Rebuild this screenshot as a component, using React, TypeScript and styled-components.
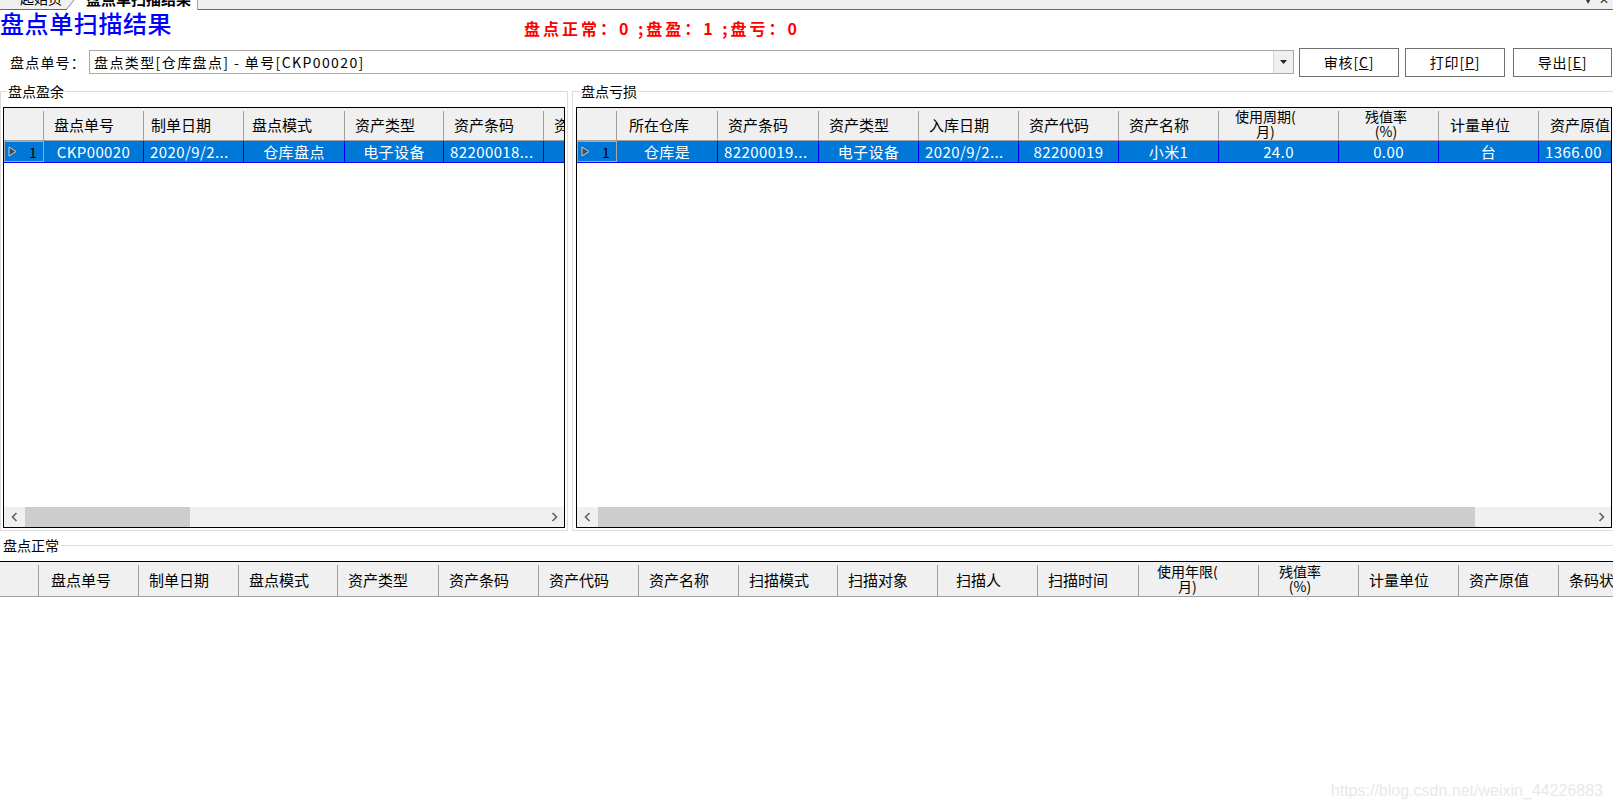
import React from 'react';
import styled, { createGlobalStyle, css } from 'styled-components';

const GlobalStyle = createGlobalStyle`
    html, body {
        margin: 0;
        padding: 0;
        background: #fff;
    }
    body {
        font-family: "Noto Sans CJK SC", "Noto Sans", sans-serif;
        color: #000;
        overflow: hidden;
    }
`

const Page = styled.div`
    position: relative;
    width: 1613px;
    height: 808px;
    overflow: hidden;
    display: flex;
    flex-direction: column;
    background: #fff;
`

/* ---------- document tabs ---------- */

const TabStrip = styled.div`
    display: flex;
    flex: none;
    height: 10px;
    overflow: hidden;
    background: #f0f0f0;
`

const Tab = styled.div<{ $active?: boolean; $width: number }>`
    flex: none;
    box-sizing: border-box;
    width: ${p => p.$width}px;
    height: 10px;
    display: flex;
    align-items: flex-end;
    overflow: hidden;
    padding-bottom: 3px;
    ${p => p.$active
        ? css`
            background: #fff;
            border-right: 1px solid #a0a0a0;
            padding-left: 12px;
            font-weight: 700;
            font-size: 15px;
        `
        : css`
            border-bottom: 1px solid #696969;
            padding-left: 20px;
            font-size: 14px;
        `}
`

const TabLabel = styled.span`
    line-height: 16px;
    white-space: nowrap;
`

const TabSlant = styled.svg`
    flex: none;
    display: block;
`

const TabFiller = styled.div`
    flex: 1;
    height: 10px;
    box-sizing: border-box;
    border-bottom: 1px solid #696969;
    display: flex;
    justify-content: flex-end;
    align-items: flex-end;
    padding: 0 4px 4px 0;
    gap: 8px;
    overflow: hidden;
    font-size: 12px;
    color: #333;
`

const TabGlyph = styled.span`
    line-height: 12px;
`

/* ---------- title + summary ---------- */

const TitleRow = styled.div`
    display: flex;
    align-items: flex-start;
    flex: none;
    height: 37px;
`

const PageTitle = styled.h1`
    margin: 0;
    width: 524px;
    flex: none;
    font-size: 24px;
    line-height: 26px;
    font-weight: 500;
    letter-spacing: 0.6px;
    color: #0000ff;
`

const Summary = styled.div`
    margin-top: 9px;
    font-size: 16px;
    line-height: 18px;
    font-weight: 700;
    letter-spacing: 3px;
    white-space: pre;
    color: #ff0000;
`

/* ---------- toolbar ---------- */

const Toolbar = styled.div`
    display: flex;
    align-items: center;
    flex: none;
    height: 30px;
    padding-left: 10px;
`

const FieldLabel = styled.span`
    width: 79px;
    flex: none;
    font-size: 14px;
    letter-spacing: 1.2px;
    white-space: nowrap;
`

const Combo = styled.div`
    width: 1205px;
    height: 24px;
    flex: none;
    box-sizing: border-box;
    border: 1px solid #a9a9a9;
    display: flex;
    background: #fff;
`

const ComboText = styled.div`
    flex: 1;
    padding-left: 4px;
    font-size: 14px;
    line-height: 22px;
    letter-spacing: 1.4px;
    white-space: pre;
`

const ComboButton = styled.div`
    width: 19px;
    flex: none;
    border-left: 1px solid #d4d4d4;
    background: #f0f0f0;
    display: flex;
    align-items: center;
    justify-content: center;
`

const ActionButton = styled.button<{ $gap: number; $width?: number }>`
    margin-left: ${p => p.$gap}px;
    width: ${p => p.$width || 100}px;
    height: 29px;
    flex: none;
    box-sizing: border-box;
    padding: 0;
    border: 1px solid #707070;
    background: #fff;
    color: #000;
    font-family: "Noto Sans CJK SC", sans-serif;
    font-size: 14px;
    letter-spacing: 0.8px;

    u {
        text-decoration: underline;
    }
`

/* ---------- group boxes ---------- */

const TopPanels = styled.div`
    display: flex;
    gap: 4px;
    flex: none;
    margin-top: 4px;
`

const GroupBox = styled.fieldset<{ $width: number; $pad: number }>`
    margin: 0;
    min-width: 0;
    flex: none;
    box-sizing: border-box;
    width: ${p => p.$width}px;
    border: 1px solid #dcdcdc;
    padding: 6px ${p => p.$pad}px 2px;
`

const GroupLegend = styled.legend`
    margin-left: 4px;
    padding: 0 1px;
    font-size: 14px;
    line-height: 20px;
`

const BottomSection = styled.div`
    flex: 1;
    min-height: 0;
    display: flex;
    flex-direction: column;
    margin-top: 4px;
`

const SectionHead = styled.div`
    display: flex;
    align-items: center;
    flex: none;
    height: 20px;
    padding-left: 3px;
    font-size: 14px;
    margin-bottom: 6px;
`

const SectionRule = styled.div`
    flex: 1;
    height: 1px;
    margin-left: 2px;
    background: #dcdcdc;
`

/* ---------- data grid ---------- */

const GridFrame = styled.div<{ $open?: boolean }>`
    box-sizing: border-box;
    display: flex;
    flex-direction: column;
    overflow: hidden;
    background: #fff;
    font-size: 15px;
    ${p => p.$open
        ? css`
            flex: 1;
            border-top: 1px solid #000;
        `
        : css`
            height: 421px;
            border: 1px solid #000;
        `}
`

const HeaderRow = styled.div<{ $height: number }>`
    display: flex;
    flex: none;
    height: ${p => p.$height}px;
    background: #f0f0f0;
    border-bottom: 1px solid #a0a0a0;
`

const HeadCell = styled.div<{ $width: number; $pad: number }>`
    position: relative;
    flex: none;
    box-sizing: border-box;
    width: ${p => p.$width}px;
    display: flex;
    align-items: center;
    padding-left: ${p => p.$pad}px;
    white-space: nowrap;
    overflow: hidden;

    &::after {
        content: "";
        position: absolute;
        right: 0;
        top: 3px;
        bottom: 0;
        width: 1px;
        background: #a0a0a0;
    }
`

const WrappedTitle = styled.span`
    display: inline-block;
    text-align: center;
    font-size: 14px;
    line-height: 15px;
`

const DataRow = styled.div`
    display: flex;
    flex: none;
    height: 21px;
    background: #0078d7;
    border-bottom: 1px solid #0000ff;
    color: #fff;
`

const RowMarker = styled.div<{ $width: number }>`
    flex: none;
    box-sizing: border-box;
    width: ${p => p.$width}px;
    display: flex;
    align-items: center;
    gap: 12px;
    padding-left: 4px;
    box-shadow: inset 0 0 0 1px #a9a9a9;
    color: #000;
    font-size: 14px;
`

const DataCell = styled.div<{ $width: number; $align: 'left' | 'center' }>`
    flex: none;
    box-sizing: border-box;
    width: ${p => p.$width}px;
    display: flex;
    align-items: center;
    justify-content: ${p => p.$align === 'center' ? 'center' : 'flex-start'};
    padding: 0 6px;
    border-right: 1px solid #0000ff;
    white-space: nowrap;
    overflow: hidden;
    letter-spacing: 0.4px;
`

const GridBody = styled.div`
    flex: 1;
`

const HScroll = styled.div`
    flex: none;
    display: flex;
    height: 20px;
    background: #f0f0f0;
`

const ScrollArrow = styled.div<{ $width: number }>`
    flex: none;
    width: ${p => p.$width}px;
    display: flex;
    align-items: center;
    justify-content: center;
`

const ScrollTrack = styled.div`
    flex: 1;
    display: flex;
`

const ScrollThumb = styled.div<{ $width: number }>`
    width: ${p => p.$width}px;
    background: #cdcdcd;
`

const Watermark = styled.div`
    position: absolute;
    right: 10px;
    bottom: 8px;
    font-family: "Liberation Sans", Arial, sans-serif;
    font-size: 16px;
    color: #e9e9e9;
    pointer-events: none;
`

/* ---------- helpers ---------- */

interface Column {
    title: string
    width: number
    pad?: number
    lines?: string[]
}

interface Cell {
    text: string
    align: 'left' | 'center'
}

const Chevron = ({ dir }: { dir: 'left' | 'right' }) => (
    <svg width="7" height="10" viewBox="0 0 7 10">
        <polyline
            points={dir === 'left' ? '5.5,1 1.5,5 5.5,9' : '1.5,1 5.5,5 1.5,9'}
            fill="none"
            stroke="#606060"
            strokeWidth="1.6"
        />
    </svg>
)

const RowArrow = () => (
    <svg width="9" height="11" viewBox="0 0 9 11">
        <polygon points="1,1 8,5.5 1,10" fill="#4a4a4a" stroke="#cfcfcf" strokeWidth="1" />
    </svg>
)

interface GridProps {
    columns: Column[]
    markerWidth: number
    headHeight: number
    row?: Cell[]
    thumb?: number
    open?: boolean
}

const DataGrid = ({ columns, markerWidth, headHeight, row, thumb, open }: GridProps) => (
    <GridFrame $open={open}>
        <HeaderRow $height={headHeight}>
            <HeadCell $width={markerWidth} $pad={0} />
            {columns.map(col => (
                <HeadCell key={col.title} $width={col.width} $pad={col.pad ?? 10}>
                    {col.lines
                        ? <WrappedTitle>{col.lines[0]}<br />{col.lines[1]}</WrappedTitle>
                        : col.title}
                </HeadCell>
            ))}
        </HeaderRow>
        {row && (
            <DataRow>
                <RowMarker $width={markerWidth}>
                    <RowArrow />
                    <span>1</span>
                </RowMarker>
                {row.map((cell, i) => (
                    <DataCell key={i} $width={columns[i].width} $align={cell.align}>{cell.text}</DataCell>
                ))}
            </DataRow>
        )}
        <GridBody />
        {thumb !== undefined && (
            <HScroll>
                <ScrollArrow $width={21}><Chevron dir="left" /></ScrollArrow>
                <ScrollTrack><ScrollThumb $width={thumb} /></ScrollTrack>
                <ScrollArrow $width={20}><Chevron dir="right" /></ScrollArrow>
            </HScroll>
        )}
    </GridFrame>
)

/* ---------- data ---------- */

const surplusColumns: Column[] = [
    { title: '盘点单号', width: 100 },
    { title: '制单日期', width: 100, pad: 7 },
    { title: '盘点模式', width: 101, pad: 8 },
    { title: '资产类型', width: 99 },
    { title: '资产条码', width: 100 },
    { title: '资产代码', width: 100 },
]

const surplusRow: Cell[] = [
    { text: 'CKP00020', align: 'center' },
    { text: '2020/9/2...', align: 'left' },
    { text: '仓库盘点', align: 'center' },
    { text: '电子设备', align: 'center' },
    { text: '82200018...', align: 'left' },
    { text: '', align: 'center' },
]

const lossColumns: Column[] = [
    { title: '所在仓库', width: 101, pad: 12 },
    { title: '资产条码', width: 101 },
    { title: '资产类型', width: 100 },
    { title: '入库日期', width: 100 },
    { title: '资产代码', width: 100 },
    { title: '资产名称', width: 100 },
    { title: '使用周期(月)', width: 120, pad: 16, lines: ['使用周期(', '月)'] },
    { title: '残值率(%)', width: 100, pad: 26, lines: ['残值率', '(%)'] },
    { title: '计量单位', width: 100, pad: 11 },
    { title: '资产原值', width: 100, pad: 11 },
]

const lossRow: Cell[] = [
    { text: '仓库是', align: 'center' },
    { text: '82200019...', align: 'left' },
    { text: '电子设备', align: 'center' },
    { text: '2020/9/2...', align: 'left' },
    { text: '82200019', align: 'center' },
    { text: '小米1', align: 'center' },
    { text: '24.0', align: 'center' },
    { text: '0.00', align: 'center' },
    { text: '台', align: 'center' },
    { text: '1366.00', align: 'left' },
]

const normalColumns: Column[] = [
    { title: '盘点单号', width: 100, pad: 12 },
    { title: '制单日期', width: 100 },
    { title: '盘点模式', width: 99 },
    { title: '资产类型', width: 101 },
    { title: '资产条码', width: 100 },
    { title: '资产代码', width: 100 },
    { title: '资产名称', width: 100 },
    { title: '扫描模式', width: 99 },
    { title: '扫描对象', width: 100 },
    { title: '扫描人', width: 100, pad: 18 },
    { title: '扫描时间', width: 101 },
    { title: '使用年限(月)', width: 120, pad: 18, lines: ['使用年限(', '月)'] },
    { title: '残值率(%)', width: 100, pad: 20, lines: ['残值率', '(%)'] },
    { title: '计量单位', width: 100 },
    { title: '资产原值', width: 100 },
    { title: '条码状态', width: 100 },
]

export default function App() {
    return (
        <Page>
            <GlobalStyle />
            <TabStrip>
                <Tab $width={66}><TabLabel>起始页</TabLabel></Tab>
                <TabSlant width="8" height="10" viewBox="0 0 8 10">
                    <polygon points="0,10 8,0 8,10" fill="#fff" />
                    <line x1="0" y1="10" x2="8" y2="0" stroke="#808080" strokeWidth="1" />
                    <line x1="0" y1="9.5" x2="1" y2="9.5" stroke="#696969" strokeWidth="1" />
                </TabSlant>
                <Tab $active $width={124}><TabLabel>盘点单扫描结果</TabLabel></Tab>
                <TabFiller>
                    <TabGlyph>▾</TabGlyph>
                    <TabGlyph>✕</TabGlyph>
                </TabFiller>
            </TabStrip>

            <TitleRow>
                <PageTitle>盘点单扫描结果</PageTitle>
                <Summary>{'盘点正常：0 ;盘盈：1 ;盘亏：0'}</Summary>
            </TitleRow>

            <Toolbar>
                <FieldLabel>盘点单号：</FieldLabel>
                <Combo>
                    <ComboText>盘点类型[仓库盘点] - 单号[CKP00020]</ComboText>
                    <ComboButton>
                        <svg width="7" height="4" viewBox="0 0 7 4">
                            <polygon points="0,0 7,0 3.5,4" fill="#222" />
                        </svg>
                    </ComboButton>
                </Combo>
                <ActionButton $gap={5}>审核[<u>C</u>]</ActionButton>
                <ActionButton $gap={6}>打印[<u>P</u>]</ActionButton>
                <ActionButton $gap={8} $width={99}>导出[<u>E</u>]</ActionButton>
            </Toolbar>

            <TopPanels>
                <GroupBox $width={568} $pad={2}>
                    <GroupLegend>盘点盈余</GroupLegend>
                    <DataGrid
                        columns={surplusColumns}
                        markerWidth={40}
                        headHeight={32}
                        row={surplusRow}
                        thumb={165}
                    />
                </GroupBox>
                <GroupBox $width={1044} $pad={3}>
                    <GroupLegend>盘点亏损</GroupLegend>
                    <DataGrid
                        columns={lossColumns}
                        markerWidth={40}
                        headHeight={32}
                        row={lossRow}
                        thumb={877}
                    />
                </GroupBox>
            </TopPanels>

            <BottomSection>
                <SectionHead>
                    盘点正常
                    <SectionRule />
                </SectionHead>
                <DataGrid columns={normalColumns} markerWidth={39} headHeight={34} open />
            </BottomSection>

            <Watermark>https://blog.csdn.net/weixin_44226883</Watermark>
        </Page>
    )
}
